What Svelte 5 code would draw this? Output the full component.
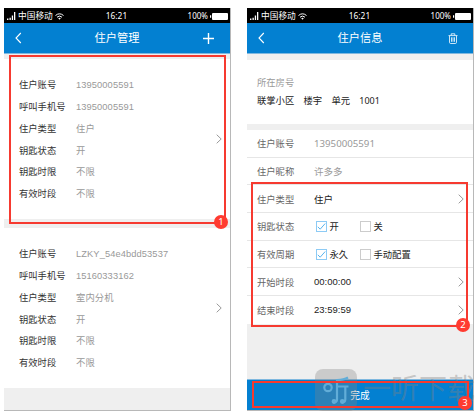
<script>
  const residents = [
    [
      ['住户账号', '13950005591'],
      ['呼叫手机号', '13950005591'],
      ['住户类型', '住户'],
      ['钥匙状态', '开'],
      ['钥匙时限', '不限'],
      ['有效时段', '不限']
    ],
    [
      ['住户账号', 'LZKY_54e4bdd53537'],
      ['呼叫手机号', '15160333162'],
      ['住户类型', '室内分机'],
      ['钥匙状态', '开'],
      ['钥匙时限', '不限'],
      ['有效时段', '不限']
    ]
  ];

  let rows = $state([
    { label: '住户账号', value: '13950005591', kind: 'muted number' },
    { label: '住户昵称', value: '许多多', kind: 'muted' },
    { label: '住户类型', value: '住户', link: true },
    { label: '钥匙状态', options: ['开', '关'], picked: 0 },
    { label: '有效周期', options: ['永久', '手动配置'], picked: 0 },
    { label: '开始时段', value: '00:00:00', link: true },
    { label: '结束时段', value: '23:59:59', link: true }
  ]);
</script>

{#snippet statusBar()}
  <div class="status">
    <div class="carrier">
      <svg width="9" height="8" viewBox="0 0 9 8">
        <path d="M0 6.600h1.400V8H0zM2.500 5.800h1.300V8H2.500zM4.800 3.500h1.300V8H4.800zM7 0h1.300v8H7z" fill="#fff" />
      </svg>
      <span>中国移动</span>
      <svg width="9" height="7" viewBox="0 0 9 7" fill="none" stroke="#fff">
        <path d="M.5 2.5Q4.5-.9 8.5 2.5M2 4.2Q4.5 2 7 4.2" />
        <path d="M3.2 5.3 4.5 6.8 5.8 5.3Q4.5 4.3 3.2 5.3z" fill="#fff" stroke="none" />
      </svg>
    </div>
    <span class="time">16:21</span>
    <div class="power">
      <span>100%</span>
      <svg width="18" height="7" viewBox="0 0 18 7">
        <path d="M0 2.3h1.2v2.4H0z" fill="#fff" />
        <rect x="2" y="0" width="16" height="7" rx="1" fill="#fff" />
      </svg>
    </div>
  </div>
{/snippet}

{#snippet back()}
  <svg width="7" height="12" viewBox="0 0 7 12" fill="none" stroke="#fff" stroke-width="1.1">
    <path d="M5.8 1 1 6l4.8 5" />
  </svg>
{/snippet}

{#snippet arrow()}
  <svg class="arrow" width="6" height="10" viewBox="0 0 6 10" fill="none" stroke="#999">
    <path d="M.7.7 5.2 5 .7 9.3" />
  </svg>
{/snippet}

<main>
  <section class="phone">
    {@render statusBar()}
    <header>
      {@render back()}
      <h1>住户管理</h1>
      <svg class="action" width="11" height="11" viewBox="0 0 11 11" stroke="#fff" stroke-width="1.4">
        <path d="M5.5 0v11M0 5.5h11" />
      </svg>
    </header>
    <div class="list">
      {#each residents as resident}
        <article>
          <dl>
            {#each resident as [label, value]}
              <dt>{label}</dt>
              <dd>{value}</dd>
            {/each}
          </dl>
          {@render arrow()}
        </article>
      {/each}
    </div>
  </section>

  <section class="phone">
    {@render statusBar()}
    <header>
      {@render back()}
      <h1>住户信息</h1>
      <svg class="action trash" width="10" height="11" viewBox="0 0 10 11" fill="none" stroke="#fff" stroke-width=".8">
        <path d="M.5 2.6h9M3.2 2.4V.8h3.6v1.6M1.5 2.8v6.5q0 1.2 1.2 1.2h4.6q1.2 0 1.2-1.2V2.8M3.5 4.3v4.5M5 4.3v4.5M6.5 4.3v4.5" />
      </svg>
    </header>
    <div class="room">
      <p class="caption">所在房号</p>
      <p class="address"><span>联掌小区</span><span>楼宇</span><span>单元</span><span class="unit">1001</span></p>
    </div>
    <div class="form">
      {#each rows as row}
        <div class="row">
          <span class="label">{row.label}</span>
          {#if row.options}
            <div class="options">
              {#each row.options as option, i}
                <button onclick={() => (row.picked = i)}>
                  <span class="box" class:checked={row.picked === i}>
                    {#if row.picked === i}
                      <svg width="9" height="9" viewBox="0 0 9 9" fill="none" stroke="#58b4ee">
                        <path d="M.8 4.8 3.2 7.2 8.2 1.5" />
                      </svg>
                    {/if}
                  </span>
                  {option}
                </button>
              {/each}
            </div>
          {:else}
            <span class="value {row.kind}">{row.value}</span>
          {/if}
          {#if row.link}
            {@render arrow()}
          {/if}
        </div>
      {/each}
    </div>
    <button class="done">完成</button>
  </section>

  <!-- numbered callouts over both screens -->
  <div class="callout first"><span>1</span></div>
  <div class="callout second"><span>2</span></div>
  <div class="callout third"><span>3</span></div>

  <div class="watermark">
    <div class="logo">
      <svg width="42" height="42" viewBox="0 0 42 42" fill="none" stroke="#62add8" stroke-width="2.2">
        <circle cx="13" cy="18.5" r="3.700" />
        <path d="M33 8.500q-4 2.500-11 2.500v19.500q0 3-3.500 3M22 17.500h11.500M30.300 17.500v13q0 3-3.500 3" />
        <circle cx="19" cy="32.500" r="1.300" />
        <circle cx="27.300" cy="32.500" r="1.300" />
      </svg>
    </div>
    <span>一听下载</span>
  </div>
</main>

<style>
  :global(body) {
    margin: 0;
    background: #fff;
  }

  main {
    position: relative;
    box-sizing: border-box;
    width: 475px;
    height: 411px;
    padding: 8px 0 0 4px;
    display: flex;
    gap: 16px;
    overflow: hidden;
    font-family: 'Liberation Sans', 'Noto Sans CJK SC', sans-serif;
    font-size: 9.3px;
    color: #333;
  }

  h1,
  p,
  dl,
  dd {
    margin: 0;
  }

  svg {
    display: block;
  }

  button {
    padding: 0;
    border: 0;
    background: none;
    font: inherit;
    color: inherit;
  }

  .phone {
    box-sizing: border-box;
    flex: none;
    width: 227px;
    height: 403px;
    display: flex;
    flex-direction: column;
    border-right: 1px solid #b8b8b8;
    border-bottom: 1px solid #b8b8b8;
    background: #efefef;
  }

  .status {
    flex: none;
    box-sizing: border-box;
    height: 15px;
    display: grid;
    grid-template-columns: 1fr auto 1fr;
    align-items: center;
    padding: 1px 2px 0 3px;
    background: #000;
    color: #fff;
    font-family: 'Noto Sans', 'Noto Sans CJK SC', sans-serif;
    font-size: 8px;
    line-height: 14px;
  }

  .carrier,
  .power {
    display: flex;
    align-items: center;
  }

  .carrier {
    gap: 2px;
    font-size: 8.7px;
  }

  .time {
    padding-right: 2px;
    font-size: 8.4px;
  }

  .power {
    justify-content: flex-end;
    gap: 2px;
  }

  header {
    flex: none;
    height: 31px;
    box-sizing: border-box;
    display: grid;
    grid-template-columns: 20px 1fr 20px;
    align-items: center;
    padding: 0 12px 0 11px;
    border-bottom: 1px solid #7fb8df;
    background: #0380d1;
    color: #fff;
  }

  h1 {
    padding: 1px 0 0 1px;
    font-size: 11.2px;
    font-weight: 400;
    line-height: 29px;
    text-align: center;
  }

  .action {
    justify-self: center;
  }

  .trash {
    margin-left: 3px;
  }

  .list {
    display: flex;
    flex-direction: column;
    gap: 9px;
    padding-top: 5px;
  }

  article {
    box-sizing: border-box;
    height: 160px;
    display: flex;
    align-items: center;
    justify-content: space-between;
    padding: 0 8px 0 15px;
    background: #fff;
  }

  dl {
    display: grid;
    grid-template-columns: 57px auto;
    grid-auto-rows: 21.75px;
    padding-top: 3px;
  }

  dt,
  dd {
    line-height: 21.75px;
    white-space: nowrap;
  }

  dd {
    letter-spacing: 0.1px;
    color: #999;
  }

  .room {
    box-sizing: border-box;
    height: 64px;
    margin-top: 6px;
    padding: 14px 10px 0;
    background: #fff;
    line-height: 18px;
  }

  .caption {
    color: #999;
  }

  .address {
    display: flex;
    gap: 9.3px;
    color: #222;
    font-family: 'Noto Sans', 'Noto Sans CJK SC', sans-serif;
  }

  .unit {
    font-size: 9px;
  }

  .form {
    margin-top: 6px;
    background: #fff;
  }

  .row {
    box-sizing: border-box;
    height: 27.7px;
    display: flex;
    align-items: center;
    padding: 0 9px 0 10px;
    border-bottom: 1px solid #e6e6e6;
  }

  .row:last-child {
    border-bottom: 0;
  }

  .label {
    width: 57px;
    color: #666;
  }

  .value {
    color: #222;
    font-size: 9.5px;
  }

  .value.muted {
    color: #999;
  }

  .value.number {
    font-family: 'Noto Sans', sans-serif;
    font-size: 9.7px;
  }

  .row .arrow {
    margin-left: auto;
  }

  .options {
    display: grid;
    grid-template-columns: 44px auto;
    padding-left: 2px;
  }

  .options button {
    display: flex;
    align-items: center;
    gap: 2.5px;
    color: #222;
  }

  .box {
    box-sizing: border-box;
    width: 11px;
    height: 11px;
    border: 1px solid #ccc;
  }

  .checked {
    border-color: #8dcbf5;
  }

  .done {
    height: 31px;
    margin-top: auto;
    border-top: 1px solid #7fb8df;
    background: #0380d1;
    color: #fff;
    font-size: 9.7px;
  }

  .callout {
    position: absolute;
    z-index: 1;
    box-sizing: border-box;
    border: 2px solid #f63a30;
    pointer-events: none;
  }

  .first {
    left: 9px;
    top: 55px;
    width: 217px;
    height: 169px;
  }

  .second {
    left: 251px;
    top: 182px;
    width: 217px;
    height: 145px;
  }

  .third {
    left: 252px;
    top: 381px;
    width: 217px;
    height: 27px;
  }

  .callout span {
    position: absolute;
    right: -4px;
    bottom: -7px;
    width: 14px;
    height: 14px;
    border-radius: 50%;
    background: #ff3b30;
    color: #fff;
    font: 9.5px/14px 'Noto Sans', sans-serif;
    text-align: center;
  }

  .third span {
    right: -5px;
    bottom: -4px;
  }

  .watermark {
    position: absolute;
    left: 315px;
    top: 369px;
    display: flex;
    align-items: flex-start;
    gap: 6px;
    color: rgba(130, 130, 130, 0.4);
    font-size: 28px;
    line-height: 42px;
    white-space: nowrap;
    pointer-events: none;
  }

  .logo {
    width: 42px;
    height: 42px;
    border-radius: 8px;
    background: rgba(130, 130, 130, 0.33);
  }
</style>
